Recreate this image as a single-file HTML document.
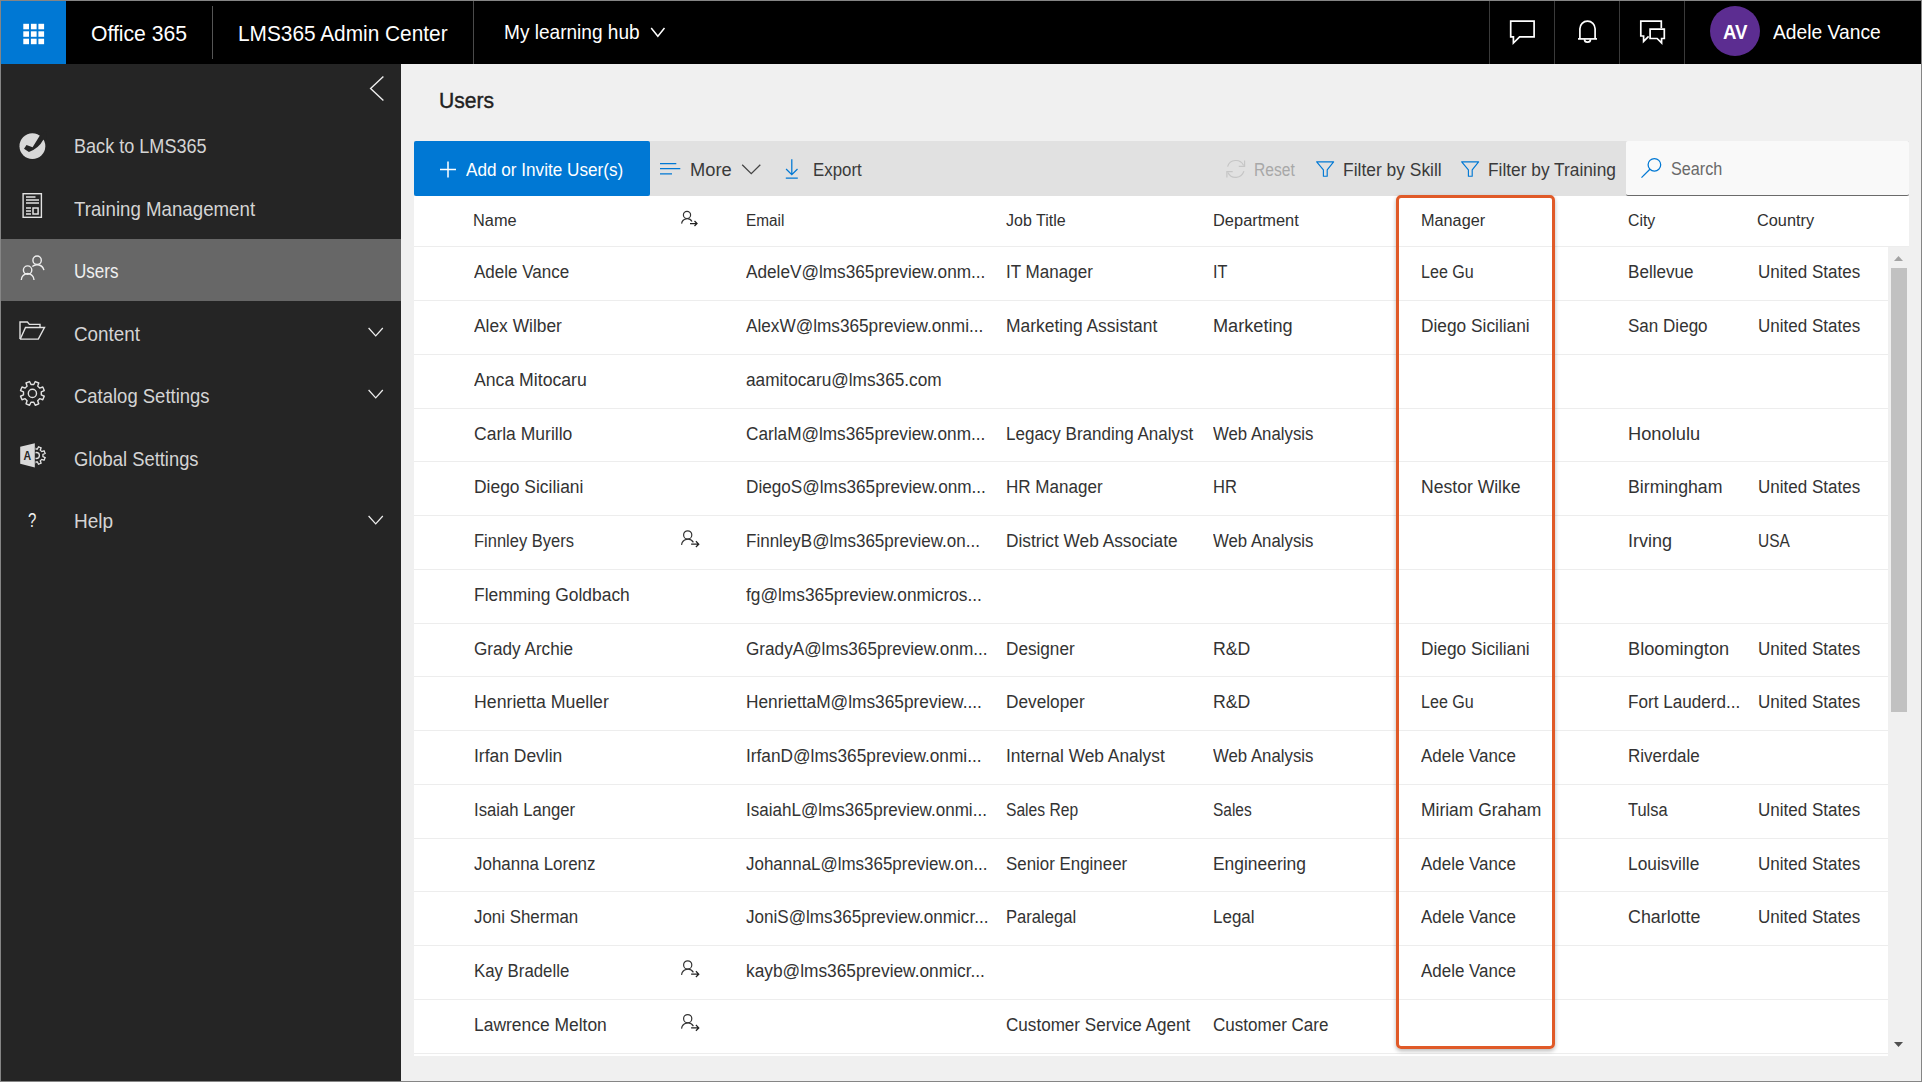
<!DOCTYPE html>
<html lang="en"><head><meta charset="utf-8"><title>Users - LMS365 Admin Center</title>
<style>

html,body{margin:0;padding:0;}
body{width:1922px;height:1082px;position:relative;overflow:hidden;background:#f0f0f0;font-family:"Liberation Sans", sans-serif;}
div,span,svg{position:absolute;}
.t{white-space:nowrap;line-height:1;transform-origin:0 0;font-family:"Liberation Sans", sans-serif;}
.i{overflow:visible;}
#frame{left:0;top:0;width:1922px;height:1082px;box-sizing:border-box;border:1px solid #858585;z-index:50;}
#topbar{left:1px;top:1px;width:1920px;height:63px;background:#000;}
#tile{left:1px;top:1px;width:65px;height:63px;background:#0078d4;}
.vd{width:1px;background:#3a3a3a;}
#sidebar{left:1px;top:64px;width:400px;height:1017px;background:#252525;}
#sel{left:1px;top:239px;width:400px;height:62px;background:#676767;}
#toolbar{left:414px;top:141px;width:1495px;height:55px;background:#e1e1e1;}
#addbtn{left:414px;top:141px;width:236px;height:55px;background:#0078d4;border-radius:2px;}
#search{left:1626px;top:141px;width:283px;height:55px;box-sizing:border-box;background:#f9f9f9;border-bottom:1px solid #6b6b6b;border-radius:2px;}
#thead{left:414px;top:196px;width:1495px;height:50px;background:#fff;}
#tbody{left:414px;top:246px;width:1474px;height:810px;background:#fff;}
#thumb{left:1890.6px;top:268px;width:16.6px;height:443.7px;background:#c1c1c1;}
.rl{left:414px;width:1474px;height:1px;background:#ededed;}
#hl{left:1396px;top:195px;width:159px;height:854px;box-sizing:border-box;border:3px solid #e05a28;border-radius:5px;box-shadow:0 2px 4px rgba(0,0,0,.28);}
#avatar{left:1710px;top:6px;width:50px;height:50px;border-radius:50%;background:#5c2d91;}

</style></head><body>
<header>
<div id="topbar"></div><div id="tile"></div>
<div class="vd" style="left:212px;top:6px;height:53px;background:#555"></div>
<div class="vd" style="left:473px;top:1px;height:63px;background:#4a4a4a"></div>
<div class="vd" style="left:1489px;top:1px;height:63px;"></div>
<div class="vd" style="left:1554px;top:1px;height:63px;"></div>
<div class="vd" style="left:1619px;top:1px;height:63px;"></div>
<div class="vd" style="left:1684px;top:1px;height:63px;"></div>
<div id="avatar"></div>
<svg class="i" style="left:22px;top:22px;" width="24" height="24" viewBox="22 22 24 24"><rect x="23.3" y="23.8" width="5.7" height="5.5" fill="#fff"/><rect x="30.9" y="23.8" width="5.7" height="5.5" fill="#fff"/><rect x="38.4" y="23.8" width="5.7" height="5.5" fill="#fff"/><rect x="23.3" y="31.3" width="5.7" height="5.5" fill="#fff"/><rect x="30.9" y="31.3" width="5.7" height="5.5" fill="#fff"/><rect x="38.4" y="31.3" width="5.7" height="5.5" fill="#fff"/><rect x="23.3" y="38.7" width="5.7" height="5.5" fill="#fff"/><rect x="30.9" y="38.7" width="5.7" height="5.5" fill="#fff"/><rect x="38.4" y="38.7" width="5.7" height="5.5" fill="#fff"/></svg>
<svg class="i" style="left:1508px;top:18px;" width="30" height="28" viewBox="1508 18 30 28"><path fill="none" stroke="#fff" stroke-width="1.7" stroke-linejoin="miter" d="M1510.7,21.1H1534.1V36.9H1519.6L1513.4,43V36.9H1510.7Z"/></svg>
<svg class="i" style="left:1576px;top:18px;" width="24" height="28" viewBox="1576 18 24 28"><path fill="none" stroke="#fff" stroke-width="1.7" stroke-linejoin="miter" d="M1579.9,38.9V28.7A7.6,7.6 0 0 1 1595.1,28.7V38.9"/><path fill="none" stroke="#fff" stroke-width="1.7" stroke-linejoin="miter" d="M1578,38.9H1597"/><path fill="none" stroke="#fff" stroke-width="1.7" stroke-linejoin="miter" d="M1584.5,39.2A3,3 0 0 0 1590.5,39.2"/></svg>
<svg class="i" style="left:1638px;top:18px;" width="30" height="28" viewBox="1638 18 30 28"><path fill="none" stroke="#fff" stroke-width="1.7" stroke-linejoin="miter" d="M1661.3,28V21.1H1640.8V36H1643.6V41.4L1648.6,36.4"/><path fill="none" stroke="#fff" stroke-width="1.7" stroke-linejoin="miter" d="M1650.1,29.1H1664.3V38.5H1661.6V42.9L1657.1,38.5H1650.1Z"/></svg>
<svg class="i" style="left:649px;top:26px;" width="18" height="13" viewBox="649 26 18 13"><path fill="none" stroke="#fff" stroke-width="1.5" d="M651.2,28L657.85,36.2L664.5,28"/></svg>
<span class="t" style="left:90.70px;top:23px;font-size:21.2px;color:#fff;transform:scaleX(0.9978);">Office 365</span>
<span class="t" style="left:237.72px;top:23px;font-size:21.2px;color:#fff;transform:scaleX(0.9832);">LMS365 Admin Center</span>
<span class="t" style="left:504.06px;top:22px;font-size:20.2px;color:#fff;transform:scaleX(0.9444);">My learning hub</span>
<span class="t" style="left:1723.00px;top:23px;font-size:19.5px;color:#fff;transform:scaleX(0.9557);font-weight:700;">AV</span>
<span class="t" style="left:1772.90px;top:22px;font-size:20.2px;color:#fff;transform:scaleX(0.9534);">Adele Vance</span>
</header>
<nav>
<div id="sidebar"></div><div id="sel"></div>
<svg class="i" style="left:368px;top:74px;" width="18" height="29" viewBox="368 74 18 29"><path fill="none" stroke="#eee" stroke-width="1.4" d="M383.4,76.5L370.6,88.5L383.4,100.5"/></svg>
<svg class="i" style="left:18px;top:131px;" width="30" height="30" viewBox="18 131 30 30"><circle cx="32.4" cy="146.2" r="12.9" fill="#d9d9d9"/><path fill="#252525" d="M26.5,144.9L32.6,147.3L40,135.2L46,131L47,139L43.3,139.8Q38.8,148.3 28.9,152.1L24,148.8Z"/></svg>
<svg class="i" style="left:21px;top:192px;" width="23" height="27" viewBox="21 192 23 27"><rect x="23.1" y="193.7" width="18.3" height="23.6" fill="none" stroke="#e2e2e2" stroke-width="1.4"/><path fill="none" stroke="#e2e2e2" stroke-width="1.5" d="M26,196.9H35.5M26,200H39M26,203.1H39M26,207.9H31M26,211H31M26,214.1H31"/><rect x="33" y="208" width="5.1" height="6" fill="none" stroke="#e2e2e2" stroke-width="1.5"/></svg>
<svg class="i" style="left:19px;top:254px;" width="27" height="28" viewBox="19 254 27 28"><circle cx="37.1" cy="260.2" r="4.2" fill="none" stroke="#ededed" stroke-width="1.4"/><path fill="none" stroke="#ededed" stroke-width="1.4" d="M32.3,266.6A7,7 0 0 1 43.9,270.2"/><circle cx="27.6" cy="270.1" r="4.2" fill="none" stroke="#ededed" stroke-width="1.4"/><path fill="none" stroke="#ededed" stroke-width="1.4" d="M21.3,279.9A6.35,6.35 0 0 1 34,279.9"/></svg>
<svg class="i" style="left:18px;top:319px;" width="29" height="23" viewBox="18 319 29 23"><path fill="none" stroke="#e2e2e2" stroke-width="1.4" d="M20,339V322H27.4L29.4,324.4H40V327.4"/><path fill="none" stroke="#e2e2e2" stroke-width="1.4" d="M20.3,339L25.5,327.5H44.5L38.3,339.1H20Z"/></svg>
<svg class="i" style="left:18px;top:379px;" width="29" height="29" viewBox="18 379 29 29"><path fill="none" stroke="#e2e2e2" stroke-width="1.4" stroke-linejoin="round" d="M33.81,384.51 L35.25,381.54 L38.77,383.00 L37.69,386.12 L39.68,388.11 L42.80,387.03 L44.26,390.55 L41.29,391.99 L41.29,394.81 L44.26,396.25 L42.80,399.77 L39.68,398.69 L37.69,400.68 L38.77,403.80 L35.25,405.26 L33.81,402.29 L30.99,402.29 L29.55,405.26 L26.03,403.80 L27.11,400.68 L25.12,398.69 L22.00,399.77 L20.54,396.25 L23.51,394.81 L23.51,391.99 L20.54,390.55 L22.00,387.03 L25.12,388.11 L27.11,386.12 L26.03,383.00 L29.55,381.54 L30.99,384.51Z"/><circle cx="32.4" cy="393.4" r="4.1" fill="none" stroke="#e2e2e2" stroke-width="1.4"/></svg>
<svg class="i" style="left:18px;top:441px;" width="30" height="29" viewBox="18 441 30 29"><clipPath id="gc"><rect x="35.5" y="440" width="14" height="32"/></clipPath><g clip-path="url(#gc)"><path fill="none" stroke="#e2e2e2" stroke-width="1.3" d="M37.43,448.98 L38.50,446.75 L41.10,447.83 L40.28,450.16 L41.74,451.62 L44.07,450.80 L45.15,453.40 L42.92,454.47 L42.92,456.53 L45.15,457.60 L44.07,460.20 L41.74,459.38 L40.28,460.84 L41.10,463.17 L38.50,464.25 L37.43,462.02 L35.37,462.02 L34.30,464.25 L31.70,463.17 L32.52,460.84 L31.06,459.38 L28.73,460.20 L27.65,457.60 L29.88,456.53 L29.88,454.47 L27.65,453.40 L28.73,450.80 L31.06,451.62 L32.52,450.16 L31.70,447.83 L34.30,446.75 L35.37,448.98Z"/><circle cx="36.4" cy="455.5" r="3" fill="none" stroke="#e2e2e2" stroke-width="1.3"/></g><path fill="#d9d9d9" d="M20.2,446.7L34.8,443.3V467.5L20.2,463.8Z"/><text transform="translate(27.4,459.6) scale(0.84,1)" text-anchor="middle" font-family='"Liberation Sans", sans-serif' font-weight="700" font-size="12.6" fill="#252525">A</text></svg>
<svg class="i" style="left:366px;top:325.8px;" width="19" height="13" viewBox="366 325.8 19 13"><path fill="none" stroke="#eeeeee" stroke-width="1.25" d="M368.6,327.8L375.7,335.7L382.8,327.8"/></svg>
<svg class="i" style="left:366px;top:388.4px;" width="19" height="13" viewBox="366 388.4 19 13"><path fill="none" stroke="#eeeeee" stroke-width="1.25" d="M368.6,390.4L375.7,398.29999999999995L382.8,390.4"/></svg>
<svg class="i" style="left:366px;top:513.5px;" width="19" height="13" viewBox="366 513.5 19 13"><path fill="none" stroke="#eeeeee" stroke-width="1.25" d="M368.6,515.5L375.7,523.4L382.8,515.5"/></svg>
<span class="t" style="left:73.60px;top:136px;font-size:20.3px;color:#d4d4d4;transform:scaleX(0.8914);">Back to LMS365</span>
<span class="t" style="left:73.60px;top:199px;font-size:20.3px;color:#d4d4d4;transform:scaleX(0.9213);">Training Management</span>
<span class="t" style="left:73.60px;top:261px;font-size:20.3px;color:#f0f0f0;transform:scaleX(0.8406);">Users</span>
<span class="t" style="left:73.60px;top:324px;font-size:20.3px;color:#d4d4d4;transform:scaleX(0.9300);">Content</span>
<span class="t" style="left:73.60px;top:386px;font-size:20.3px;color:#d4d4d4;transform:scaleX(0.9107);">Catalog Settings</span>
<span class="t" style="left:73.60px;top:449px;font-size:20.3px;color:#d4d4d4;transform:scaleX(0.9054);">Global Settings</span>
<span class="t" style="left:73.60px;top:511px;font-size:20.3px;color:#d4d4d4;transform:scaleX(0.9389);">Help</span>
<span class="t" style="left:27.60px;top:511px;font-size:19.8px;color:#f2f2f2;transform:scaleX(0.7545);">?</span>
</nav>
<main>
<div id="toolbar"></div><div id="addbtn"></div><div id="search"></div>
<div id="thead"></div><div id="tbody"></div><div id="thumb"></div>
<div class="rl" style="top:246px;width:1495px"></div>
<div class="rl" style="top:300px;width:1474px"></div>
<div class="rl" style="top:354px;width:1474px"></div>
<div class="rl" style="top:408px;width:1474px"></div>
<div class="rl" style="top:461px;width:1474px"></div>
<div class="rl" style="top:515px;width:1474px"></div>
<div class="rl" style="top:569px;width:1474px"></div>
<div class="rl" style="top:623px;width:1474px"></div>
<div class="rl" style="top:676px;width:1474px"></div>
<div class="rl" style="top:730px;width:1474px"></div>
<div class="rl" style="top:784px;width:1474px"></div>
<div class="rl" style="top:838px;width:1474px"></div>
<div class="rl" style="top:891px;width:1474px"></div>
<div class="rl" style="top:945px;width:1474px"></div>
<div class="rl" style="top:999px;width:1474px"></div>
<div class="rl" style="top:1053px;width:1474px"></div>
<svg class="i" style="left:1893px;top:255px;" width="11" height="7" viewBox="1893 255 11 7"><path fill="#a3a3a3" d="M1894,261L1898.5,256L1903,261Z"/></svg>
<svg class="i" style="left:1893px;top:1041px;" width="11" height="7" viewBox="1893 1041 11 7"><path fill="#505050" d="M1894,1042H1903L1898.5,1047Z"/></svg>
<svg class="i" style="left:439px;top:160px;" width="18" height="19" viewBox="439 160 18 19"><path fill="none" stroke="#fff" stroke-width="1.5" d="M440,169.4H456M448,161.4V177.4"/></svg>
<svg class="i" style="left:659px;top:162px;" width="23" height="14" viewBox="659 162 23 14"><path fill="none" stroke="#0078d4" stroke-width="1.25" d="M660,163.6H676.3M660,168.7H680.3M660,173.8H672"/></svg>
<svg class="i" style="left:740px;top:163px;" width="22" height="13" viewBox="740 163 22 13"><path fill="none" stroke="#444" stroke-width="1.3" d="M742.2,164.7L751.25,173.6L760.3,164.7"/></svg>
<svg class="i" style="left:784px;top:158px;" width="16" height="22" viewBox="784 158 16 22"><path fill="none" stroke="#0078d4" stroke-width="1.25" d="M791.8,159.2V174.6M786.1,169L791.8,174.7L797.5,169M785.8,178.2H797.8"/></svg>
<svg class="i" style="left:1225px;top:159px;" width="22" height="20" viewBox="1225 159 22 20"><path fill="none" stroke="#c6c6c6" stroke-width="1.2" d="M1227.6,166.6A8.6,8.6 0 0 1 1243.6,165.4"/><path fill="none" stroke="#c6c6c6" stroke-width="1.2" d="M1244.6,160.6V166.4H1238.8"/><path fill="none" stroke="#c6c6c6" stroke-width="1.2" d="M1243.9,171.2A8.6,8.6 0 0 1 1227.9,172.4"/><path fill="none" stroke="#c6c6c6" stroke-width="1.2" d="M1226.9,177.4V171.6H1232.7"/></svg>
<svg class="i" style="left:1315.0px;top:160px;" width="21" height="18" viewBox="1315.0 160 21 18"><path fill="none" stroke="#0078d4" stroke-width="1.15" stroke-linejoin="round" d="M1316.7,161.8H1333.6L1327.2,169.9V176.2H1323.4V169.9Z"/></svg>
<svg class="i" style="left:1459.7px;top:160px;" width="21" height="18" viewBox="1459.7 160 21 18"><path fill="none" stroke="#0078d4" stroke-width="1.15" stroke-linejoin="round" d="M1461.4,161.8H1478.3L1471.9,169.9V176.2H1468.1000000000001V169.9Z"/></svg>
<svg class="i" style="left:1640px;top:157px;" width="23" height="22" viewBox="1640 157 23 22"><circle cx="1654.4" cy="164.8" r="6.3" fill="none" stroke="#0078d4" stroke-width="1.25"/><path fill="none" stroke="#0078d4" stroke-width="1.25" d="M1649.9,169.3L1641.5,177.6"/></svg>
<svg class="i" style="left:680px;top:209px;" width="22" height="22" viewBox="680 209 22 22"><circle cx="687.00" cy="214.90" r="3.60" fill="none" stroke="#333" stroke-width="1.2"/><path fill="none" stroke="#333" stroke-width="1.2" d="M681.60,223.60A5.60,5.60 0 0 1 692.00,221.50"/><path fill="none" stroke="#222" stroke-width="1.25" d="M690.00,223.50H697.00M694.50,221.00L697.00,223.50L694.50,226.00"/></svg>
<svg class="i" style="left:680px;top:528px;" width="22" height="22" viewBox="680 528 22 22"><circle cx="687.70" cy="534.90" r="4.10" fill="none" stroke="#333" stroke-width="1.2"/><path fill="none" stroke="#333" stroke-width="1.2" d="M681.54,544.81A6.38,6.38 0 0 1 693.40,542.42"/><path fill="none" stroke="#222" stroke-width="1.25" d="M691.12,544.13H698.76M695.91,541.28L698.76,544.13L695.91,546.98"/></svg>
<svg class="i" style="left:680px;top:958px;" width="22" height="22" viewBox="680 958 22 22"><circle cx="687.70" cy="964.90" r="4.10" fill="none" stroke="#333" stroke-width="1.2"/><path fill="none" stroke="#333" stroke-width="1.2" d="M681.54,974.81A6.38,6.38 0 0 1 693.40,972.42"/><path fill="none" stroke="#222" stroke-width="1.25" d="M691.12,974.13H698.76M695.91,971.28L698.76,974.13L695.91,976.98"/></svg>
<svg class="i" style="left:680px;top:1012px;" width="22" height="22" viewBox="680 1012 22 22"><circle cx="687.70" cy="1018.65" r="4.10" fill="none" stroke="#333" stroke-width="1.2"/><path fill="none" stroke="#333" stroke-width="1.2" d="M681.54,1028.56A6.38,6.38 0 0 1 693.40,1026.17"/><path fill="none" stroke="#222" stroke-width="1.25" d="M691.12,1027.88H698.76M695.91,1025.03L698.76,1027.88L695.91,1030.73"/></svg>
<span class="t" style="left:438.65px;top:90px;font-size:22.2px;color:#222;transform:scaleX(0.9500);-webkit-text-stroke:0.4px #222;">Users</span>
<span class="t" style="left:466.00px;top:161px;font-size:18.7px;color:#fff;transform:scaleX(0.9174);">Add or Invite User(s)</span>
<span class="t" style="left:689.52px;top:161px;font-size:18.7px;color:#3a3a3a;transform:scaleX(0.9786);">More</span>
<span class="t" style="left:813.10px;top:161px;font-size:18.7px;color:#3a3a3a;transform:scaleX(0.9012);">Export</span>
<span class="t" style="left:1254.37px;top:161px;font-size:18.7px;color:#a8a8a8;transform:scaleX(0.8350);">Reset</span>
<span class="t" style="left:1343.07px;top:161px;font-size:18.7px;color:#3a3a3a;transform:scaleX(0.9320);">Filter by Skill</span>
<span class="t" style="left:1488.07px;top:161px;font-size:18.7px;color:#3a3a3a;transform:scaleX(0.9265);">Filter by Training</span>
<span class="t" style="left:1671.00px;top:160px;font-size:18.7px;color:#6a6a6a;transform:scaleX(0.8671);">Search</span>
<span class="t" style="left:473.30px;top:213px;font-size:15.6px;color:#303030;transform:scaleX(1.0483);">Name</span>
<span class="t" style="left:745.80px;top:213px;font-size:15.6px;color:#303030;transform:scaleX(0.9837);">Email</span>
<span class="t" style="left:1005.50px;top:213px;font-size:15.6px;color:#303030;transform:scaleX(1.0263);">Job Title</span>
<span class="t" style="left:1212.50px;top:213px;font-size:15.6px;color:#303030;transform:scaleX(1.0531);">Department</span>
<span class="t" style="left:1420.80px;top:213px;font-size:15.6px;color:#303030;transform:scaleX(1.0415);">Manager</span>
<span class="t" style="left:1627.60px;top:213px;font-size:15.6px;color:#303030;transform:scaleX(1.0126);">City</span>
<span class="t" style="left:1757.40px;top:213px;font-size:15.6px;color:#303030;transform:scaleX(1.0455);">Country</span>
<span class="t" style="left:473.50px;top:264px;font-size:17.6px;color:#333;transform:scaleX(0.9674);">Adele Vance</span>
<span class="t" style="left:746.00px;top:264px;font-size:17.6px;color:#333;transform:scaleX(0.9781);">AdeleV@lms365preview.onm...</span>
<span class="t" style="left:1005.70px;top:264px;font-size:17.6px;color:#333;transform:scaleX(0.9689);">IT Manager</span>
<span class="t" style="left:1212.80px;top:264px;font-size:17.6px;color:#333;transform:scaleX(0.9252);">IT</span>
<span class="t" style="left:1420.90px;top:264px;font-size:17.6px;color:#333;transform:scaleX(0.9152);">Lee Gu</span>
<span class="t" style="left:1627.70px;top:264px;font-size:17.6px;color:#333;transform:scaleX(0.9715);">Bellevue</span>
<span class="t" style="left:1757.90px;top:264px;font-size:17.6px;color:#333;transform:scaleX(0.9676);">United States</span>
<span class="t" style="left:473.50px;top:318px;font-size:17.6px;color:#333;transform:scaleX(0.9876);">Alex Wilber</span>
<span class="t" style="left:746.00px;top:318px;font-size:17.6px;color:#333;transform:scaleX(0.9778);">AlexW@lms365preview.onmi...</span>
<span class="t" style="left:1005.70px;top:318px;font-size:17.6px;color:#333;transform:scaleX(0.9914);">Marketing Assistant</span>
<span class="t" style="left:1212.80px;top:318px;font-size:17.6px;color:#333;transform:scaleX(1.0319);">Marketing</span>
<span class="t" style="left:1420.90px;top:318px;font-size:17.6px;color:#333;transform:scaleX(0.9836);">Diego Siciliani</span>
<span class="t" style="left:1627.70px;top:318px;font-size:17.6px;color:#333;transform:scaleX(0.9687);">San Diego</span>
<span class="t" style="left:1757.90px;top:318px;font-size:17.6px;color:#333;transform:scaleX(0.9676);">United States</span>
<span class="t" style="left:473.50px;top:372px;font-size:17.6px;color:#333;transform:scaleX(1.0030);">Anca Mitocaru</span>
<span class="t" style="left:746.00px;top:372px;font-size:17.6px;color:#333;transform:scaleX(0.9795);">aamitocaru@lms365.com</span>
<span class="t" style="left:473.50px;top:426px;font-size:17.6px;color:#333;transform:scaleX(0.9954);">Carla Murillo</span>
<span class="t" style="left:746.00px;top:426px;font-size:17.6px;color:#333;transform:scaleX(0.9782);">CarlaM@lms365preview.onm...</span>
<span class="t" style="left:1005.70px;top:426px;font-size:17.6px;color:#333;transform:scaleX(0.9669);">Legacy Branding Analyst</span>
<span class="t" style="left:1212.80px;top:426px;font-size:17.6px;color:#333;transform:scaleX(0.9534);">Web Analysis</span>
<span class="t" style="left:1627.70px;top:426px;font-size:17.6px;color:#333;transform:scaleX(1.0384);">Honolulu</span>
<span class="t" style="left:473.50px;top:479px;font-size:17.6px;color:#333;transform:scaleX(0.9900);">Diego Siciliani</span>
<span class="t" style="left:746.00px;top:479px;font-size:17.6px;color:#333;transform:scaleX(0.9762);">DiegoS@lms365preview.onm...</span>
<span class="t" style="left:1005.70px;top:479px;font-size:17.6px;color:#333;transform:scaleX(0.9692);">HR Manager</span>
<span class="t" style="left:1212.80px;top:479px;font-size:17.6px;color:#333;transform:scaleX(0.9391);">HR</span>
<span class="t" style="left:1420.90px;top:479px;font-size:17.6px;color:#333;transform:scaleX(0.9987);">Nestor Wilke</span>
<span class="t" style="left:1627.70px;top:479px;font-size:17.6px;color:#333;transform:scaleX(1.0064);">Birmingham</span>
<span class="t" style="left:1757.90px;top:479px;font-size:17.6px;color:#333;transform:scaleX(0.9676);">United States</span>
<span class="t" style="left:473.50px;top:533px;font-size:17.6px;color:#333;transform:scaleX(0.9374);">Finnley Byers</span>
<span class="t" style="left:746.00px;top:533px;font-size:17.6px;color:#333;transform:scaleX(0.9672);">FinnleyB@lms365preview.on...</span>
<span class="t" style="left:1005.70px;top:533px;font-size:17.6px;color:#333;transform:scaleX(0.9824);">District Web Associate</span>
<span class="t" style="left:1212.80px;top:533px;font-size:17.6px;color:#333;transform:scaleX(0.9534);">Web Analysis</span>
<span class="t" style="left:1627.70px;top:533px;font-size:17.6px;color:#333;transform:scaleX(1.0252);">Irving</span>
<span class="t" style="left:1757.90px;top:533px;font-size:17.6px;color:#333;transform:scaleX(0.8809);">USA</span>
<span class="t" style="left:473.50px;top:587px;font-size:17.6px;color:#333;transform:scaleX(0.9895);">Flemming Goldbach</span>
<span class="t" style="left:746.00px;top:587px;font-size:17.6px;color:#333;transform:scaleX(0.9835);">fg@lms365preview.onmicros...</span>
<span class="t" style="left:473.50px;top:641px;font-size:17.6px;color:#333;transform:scaleX(0.9737);">Grady Archie</span>
<span class="t" style="left:746.00px;top:641px;font-size:17.6px;color:#333;transform:scaleX(0.9754);">GradyA@lms365preview.onm...</span>
<span class="t" style="left:1005.70px;top:641px;font-size:17.6px;color:#333;transform:scaleX(0.9752);">Designer</span>
<span class="t" style="left:1212.80px;top:641px;font-size:17.6px;color:#333;transform:scaleX(1.0071);">R&amp;D</span>
<span class="t" style="left:1420.90px;top:641px;font-size:17.6px;color:#333;transform:scaleX(0.9836);">Diego Siciliani</span>
<span class="t" style="left:1627.70px;top:641px;font-size:17.6px;color:#333;transform:scaleX(1.0338);">Bloomington</span>
<span class="t" style="left:1757.90px;top:641px;font-size:17.6px;color:#333;transform:scaleX(0.9676);">United States</span>
<span class="t" style="left:473.50px;top:694px;font-size:17.6px;color:#333;transform:scaleX(1.0067);">Henrietta Mueller</span>
<span class="t" style="left:746.00px;top:694px;font-size:17.6px;color:#333;transform:scaleX(0.9835);">HenriettaM@lms365preview....</span>
<span class="t" style="left:1005.70px;top:694px;font-size:17.6px;color:#333;transform:scaleX(0.9809);">Developer</span>
<span class="t" style="left:1212.80px;top:694px;font-size:17.6px;color:#333;transform:scaleX(1.0071);">R&amp;D</span>
<span class="t" style="left:1420.90px;top:694px;font-size:17.6px;color:#333;transform:scaleX(0.9152);">Lee Gu</span>
<span class="t" style="left:1627.70px;top:694px;font-size:17.6px;color:#333;transform:scaleX(0.9720);">Fort Lauderd...</span>
<span class="t" style="left:1757.90px;top:694px;font-size:17.6px;color:#333;transform:scaleX(0.9676);">United States</span>
<span class="t" style="left:473.50px;top:748px;font-size:17.6px;color:#333;transform:scaleX(0.9921);">Irfan Devlin</span>
<span class="t" style="left:746.00px;top:748px;font-size:17.6px;color:#333;transform:scaleX(0.9823);">IrfanD@lms365preview.onmi...</span>
<span class="t" style="left:1005.70px;top:748px;font-size:17.6px;color:#333;transform:scaleX(0.9857);">Internal Web Analyst</span>
<span class="t" style="left:1212.80px;top:748px;font-size:17.6px;color:#333;transform:scaleX(0.9534);">Web Analysis</span>
<span class="t" style="left:1420.90px;top:748px;font-size:17.6px;color:#333;transform:scaleX(0.9633);">Adele Vance</span>
<span class="t" style="left:1627.70px;top:748px;font-size:17.6px;color:#333;transform:scaleX(0.9655);">Riverdale</span>
<span class="t" style="left:473.50px;top:802px;font-size:17.6px;color:#333;transform:scaleX(0.9489);">Isaiah Langer</span>
<span class="t" style="left:746.00px;top:802px;font-size:17.6px;color:#333;transform:scaleX(0.9687);">IsaiahL@lms365preview.onmi...</span>
<span class="t" style="left:1005.70px;top:802px;font-size:17.6px;color:#333;transform:scaleX(0.8883);">Sales Rep</span>
<span class="t" style="left:1212.80px;top:802px;font-size:17.6px;color:#333;transform:scaleX(0.8798);">Sales</span>
<span class="t" style="left:1420.90px;top:802px;font-size:17.6px;color:#333;transform:scaleX(0.9920);">Miriam Graham</span>
<span class="t" style="left:1627.70px;top:802px;font-size:17.6px;color:#333;transform:scaleX(0.9346);">Tulsa</span>
<span class="t" style="left:1757.90px;top:802px;font-size:17.6px;color:#333;transform:scaleX(0.9676);">United States</span>
<span class="t" style="left:473.50px;top:856px;font-size:17.6px;color:#333;transform:scaleX(0.9626);">Johanna Lorenz</span>
<span class="t" style="left:746.00px;top:856px;font-size:17.6px;color:#333;transform:scaleX(0.9637);">JohannaL@lms365preview.on...</span>
<span class="t" style="left:1005.70px;top:856px;font-size:17.6px;color:#333;transform:scaleX(0.9603);">Senior Engineer</span>
<span class="t" style="left:1212.80px;top:856px;font-size:17.6px;color:#333;transform:scaleX(0.9901);">Engineering</span>
<span class="t" style="left:1420.90px;top:856px;font-size:17.6px;color:#333;transform:scaleX(0.9633);">Adele Vance</span>
<span class="t" style="left:1627.70px;top:856px;font-size:17.6px;color:#333;transform:scaleX(0.9849);">Louisville</span>
<span class="t" style="left:1757.90px;top:856px;font-size:17.6px;color:#333;transform:scaleX(0.9676);">United States</span>
<span class="t" style="left:473.50px;top:909px;font-size:17.6px;color:#333;transform:scaleX(0.9604);">Joni Sherman</span>
<span class="t" style="left:746.00px;top:909px;font-size:17.6px;color:#333;transform:scaleX(0.9710);">JoniS@lms365preview.onmicr...</span>
<span class="t" style="left:1005.70px;top:909px;font-size:17.6px;color:#333;transform:scaleX(0.9438);">Paralegal</span>
<span class="t" style="left:1212.80px;top:909px;font-size:17.6px;color:#333;transform:scaleX(0.9658);">Legal</span>
<span class="t" style="left:1420.90px;top:909px;font-size:17.6px;color:#333;transform:scaleX(0.9633);">Adele Vance</span>
<span class="t" style="left:1627.70px;top:909px;font-size:17.6px;color:#333;transform:scaleX(1.0141);">Charlotte</span>
<span class="t" style="left:1757.90px;top:909px;font-size:17.6px;color:#333;transform:scaleX(0.9676);">United States</span>
<span class="t" style="left:473.50px;top:963px;font-size:17.6px;color:#333;transform:scaleX(0.9548);">Kay Bradelle</span>
<span class="t" style="left:746.00px;top:963px;font-size:17.6px;color:#333;transform:scaleX(0.9840);">kayb@lms365preview.onmicr...</span>
<span class="t" style="left:1420.90px;top:963px;font-size:17.6px;color:#333;transform:scaleX(0.9633);">Adele Vance</span>
<span class="t" style="left:473.50px;top:1017px;font-size:17.6px;color:#333;transform:scaleX(0.9910);">Lawrence Melton</span>
<span class="t" style="left:1005.70px;top:1017px;font-size:17.6px;color:#333;transform:scaleX(0.9712);">Customer Service Agent</span>
<span class="t" style="left:1212.80px;top:1017px;font-size:17.6px;color:#333;transform:scaleX(0.9680);">Customer Care</span>
<div id="hl"></div>
</main>
<div id="frame"></div>
</body></html>
